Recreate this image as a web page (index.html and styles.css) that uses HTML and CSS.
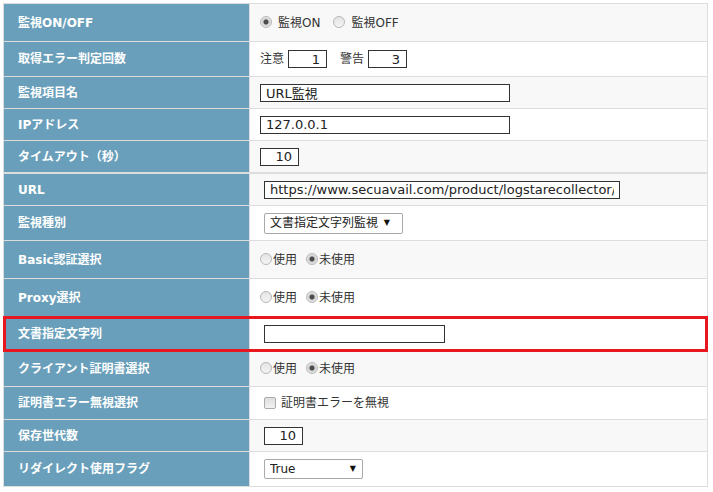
FILE: index.html
```html
<!DOCTYPE html>
<html>
<head>
  <meta charset="utf-8">
  <link rel="stylesheet" href="styles.css">
</head>
<body>
  <div class="settings">
    <div class="row row--radio row--shade">
      <div class="row-label">監視ON/OFF</div>
      <div class="row-value">
        <label class="choice choice--spaced"><input type="radio" name="watch" checked>監視ON</label>
        <label class="choice choice--spaced"><input type="radio" name="watch">監視OFF</label>
      </div>
    </div>
    <div class="row row--select">
      <div class="row-label">取得エラー判定回数</div>
      <div class="row-value">
        <span class="pair">注意<input class="field field--num" type="text" value="1"></span>
        <span class="pair">警告<input class="field field--num" type="text" value="3"></span>
      </div>
    </div>
    <div class="row row--shade">
      <div class="row-label">監視項目名</div>
      <div class="row-value">
        <input class="field field--wide" type="text" value="URL監視">
      </div>
    </div>
    <div class="row">
      <div class="row-label">IPアドレス</div>
      <div class="row-value">
        <input class="field field--wide" type="text" value="127.0.0.1">
      </div>
    </div>
    <div class="row row--shade">
      <div class="row-label">タイムアウト（秒）</div>
      <div class="row-value">
        <input class="field field--num" type="text" value="10">
      </div>
    </div>
    <div class="row row--split row--shade">
      <div class="row-label">URL</div>
      <div class="row-value row-value--inset">
        <input class="field field--url" type="text" value="https://www.secuavail.com/product/logstarecollector/">
      </div>
    </div>
    <div class="row row--select">
      <div class="row-label">監視種別</div>
      <div class="row-value row-value--inset">
        <span class="select select--kind">
          <select><option>文書指定文字列監視</option></select>
        </span>
      </div>
    </div>
    <div class="row row--radio row--shade">
      <div class="row-label">Basic認証選択</div>
      <div class="row-value">
        <label class="choice"><input type="radio" name="basic">使用</label>
        <label class="choice"><input type="radio" name="basic" checked>未使用</label>
      </div>
    </div>
    <div class="row row--radio">
      <div class="row-label">Proxy選択</div>
      <div class="row-value">
        <label class="choice"><input type="radio" name="proxy">使用</label>
        <label class="choice"><input type="radio" name="proxy" checked>未使用</label>
      </div>
    </div>
    <div class="row row--alert">
      <div class="row-label">文書指定文字列</div>
      <div class="row-value row-value--inset">
        <input class="field field--text" type="text" value="">
      </div>
    </div>
    <div class="row row--cert row--shade">
      <div class="row-label">クライアント証明書選択</div>
      <div class="row-value">
        <label class="choice"><input type="radio" name="cert">使用</label>
        <label class="choice"><input type="radio" name="cert" checked>未使用</label>
      </div>
    </div>
    <div class="row row--check">
      <div class="row-label">証明書エラー無視選択</div>
      <div class="row-value row-value--inset">
        <label class="check"><input type="checkbox">証明書エラーを無視</label>
      </div>
    </div>
    <div class="row row--shade">
      <div class="row-label">保存世代数</div>
      <div class="row-value row-value--inset">
        <input class="field field--num" type="text" value="10">
      </div>
    </div>
    <div class="row row--select">
      <div class="row-label">リダイレクト使用フラグ</div>
      <div class="row-value row-value--inset">
        <span class="select select--flag">
          <select><option>True</option><option>False</option></select>
        </span>
      </div>
    </div>
  </div>
</body>
</html>
```

FILE: styles.css
```css
body {
  margin: 0;
  padding: 3px;
  font-family: "DejaVu Sans", "Noto Sans CJK JP", sans-serif;
  font-size: 12px;
  color: #333;
  background-color: #fff;
}

.settings {
  width: 703px;
  border: 1px solid #ddd;
  border-bottom: none;
}

.row {
  display: flex;
  height: 31px;
  border-bottom: 1px solid #ddd;
  background-color: #fff;
}

.row--shade {
  background-color: #f8f8f8;
}

.row--radio {
  height: 37px;
}

.row--select {
  height: 34px;
}

.row--cert {
  height: 35px;
}

.row--check {
  height: 32px;
}

.row--split {
  border-top: 1px solid #ddd;
}

.row--alert {
  height: 33px;
  outline: 3px solid #e8171f;
  outline-offset: -2px;
  position: relative;
}

.row-label {
  width: 231px;
  flex-shrink: 0;
  display: flex;
  align-items: center;
  padding-left: 14px;
  background-color: #6a9fbb;
  border-right: 1px solid #ddd;
  color: #fff;
  font-weight: bold;
  font-size: 12px;
  line-height: 16px;
}

.row-value {
  flex-grow: 1;
  display: flex;
  align-items: center;
  padding-left: 10px;
  line-height: 16px;
}

.row-value--inset {
  padding-left: 14px;
}

.field {
  box-sizing: border-box;
  height: 18px;
  margin: 0;
  padding: 0 5px;
  border: 1px solid #333;
  border-radius: 0;
  background-color: #fff;
  color: #222;
  font-family: "DejaVu Sans", "Noto Sans CJK JP", sans-serif;
  font-size: 13px;
  outline: none;
}

.field--wide {
  width: 250px;
}

.field--url {
  width: 356px;
  padding-left: 5px;
}

.field--text {
  width: 181px;
}

.field--num {
  width: 39px;
  text-align: right;
  padding-right: 6px;
}

.pair {
  display: inline-flex;
  align-items: center;
  gap: 4px;
  margin-right: 13px;
}

.choice {
  display: inline-flex;
  align-items: center;
  margin-right: 9px;
}

input[type="radio"] {
  -webkit-appearance: none;
  appearance: none;
  box-sizing: border-box;
  width: 12px;
  height: 12px;
  margin: 0 1px 2px 0;
  border: 1px solid #b8b8b8;
  border-radius: 50%;
  background: linear-gradient(#e4e4e4, #f4f4f4);
}

input[type="radio"]:checked {
  background: radial-gradient(circle, #4b4b4b 0, #4b4b4b 2px, #cfcfcf 3px, #e6e6e6 5px);
}

.choice--spaced {
  margin-right: 13px;
}

.choice--spaced input[type="radio"] {
  margin-right: 6px;
}

.check {
  display: inline-flex;
  align-items: center;
}

input[type="checkbox"] {
  -webkit-appearance: none;
  appearance: none;
  box-sizing: border-box;
  width: 12px;
  height: 12px;
  margin: 0 5px 0 0;
  border: 1px solid #ababab;
  border-radius: 2px;
  background: linear-gradient(#dedede, #f2f2f2);
}

.select {
  position: relative;
  display: inline-block;
}

.select select {
  -webkit-appearance: none;
  appearance: none;
  box-sizing: border-box;
  height: 21px;
  margin: 0;
  padding: 0 20px 0 5px;
  border: 1px solid #a9a9a9;
  border-radius: 2px;
  background-color: #fff;
  color: #222;
  font-family: "DejaVu Sans", "Noto Sans CJK JP", sans-serif;
  font-size: 12px;
  outline: none;
}

.select::after {
  content: "▼";
  position: absolute;
  top: 50%;
  transform: translateY(-50%);
  font-size: 8px;
  color: #111;
  pointer-events: none;
}

.select--kind select {
  width: 139px;
}

.select--kind::after {
  right: 13px;
}

.select--flag select {
  width: 99px;
  height: 20px;
}

.select--flag::after {
  right: 7px;
}
```
